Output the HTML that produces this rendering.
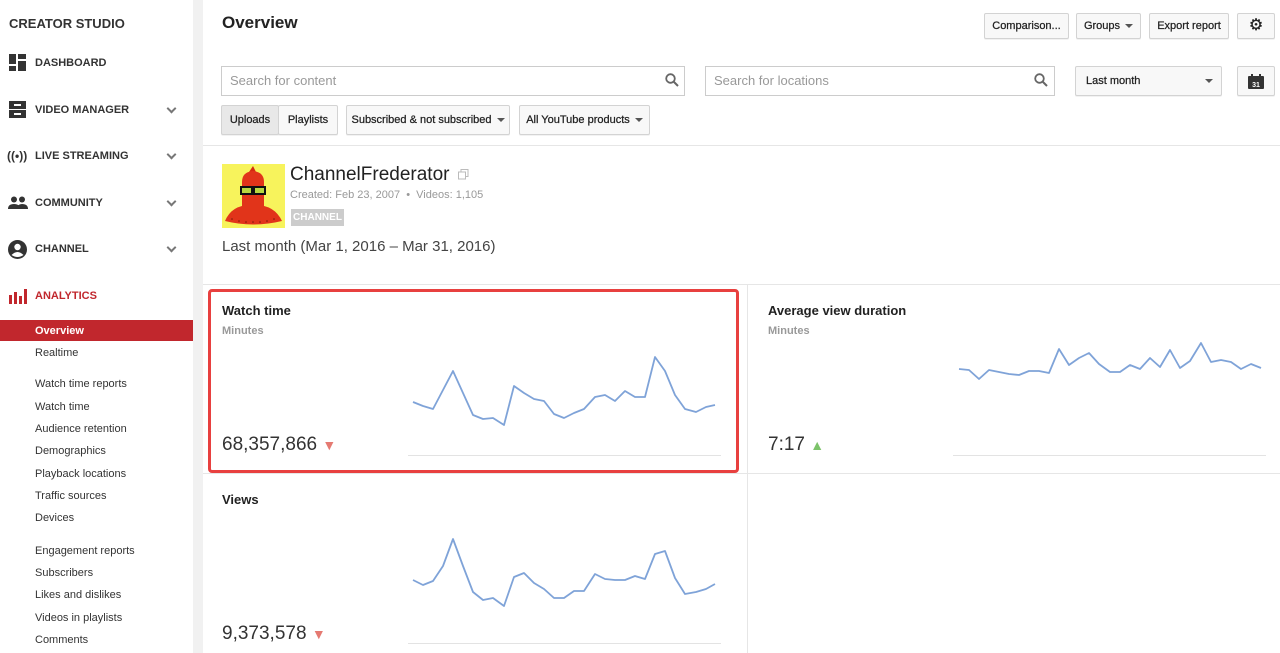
<!DOCTYPE html>
<html><head><meta charset="utf-8"><style>
*{margin:0;padding:0;box-sizing:border-box}
body{width:1280px;height:653px;overflow:hidden;background:#fff;font-family:"Liberation Sans",Arial,sans-serif;color:#333;position:relative}
.a{position:absolute}
.side{left:0;top:0;width:193px;height:653px;background:#fff}
.strip{left:193px;top:0;width:10px;height:653px;background:#f1f1f1}
.nav{position:absolute;left:35px;font-size:11px;font-weight:bold;color:#333}
.chev{position:absolute;left:168px;width:7px;height:7px;border-right:2px solid #777;border-bottom:2px solid #777;transform:rotate(45deg)}
.sub{position:absolute;left:35px;font-size:11px;color:#333}
.btn{position:absolute;border:1px solid #d3d3d3;background:#f8f8f8;border-radius:2px;font-size:11px;color:#222;text-align:center;white-space:nowrap;box-shadow:0 1px 0 rgba(0,0,0,.05);-webkit-text-stroke:0.25px #222}
.inp{position:absolute;border:1px solid #ccc;background:#fff;font-size:13px;color:#999;padding-left:8px}
.caret{display:inline-block;width:0;height:0;border-left:4px solid transparent;border-right:4px solid transparent;border-top:4px solid #555;vertical-align:middle;margin-left:5px}
.ct{position:absolute;font-size:13px;font-weight:bold;color:#222}
.cs{position:absolute;font-size:11px;font-weight:bold;color:#999}
.cv{position:absolute;font-size:19px;color:#333}
</style></head><body>
<div class="a side"></div>
<div class="a strip"></div>
<div class="a" style="left:9px;top:16px;font-size:13px;font-weight:bold;color:#333">CREATOR STUDIO</div>

<svg class="a" style="left:9px;top:54px" width="17" height="17" viewBox="0 0 17 17"><rect x="0" y="0" width="7" height="10" fill="#333"/><rect x="9" y="0" width="8" height="5" fill="#333"/><rect x="0" y="12" width="7" height="5" fill="#333"/><rect x="9" y="7" width="8" height="10" fill="#333"/></svg>
<div class="nav" style="top:57px">DASHBOARD</div>

<svg class="a" style="left:9px;top:101px" width="17" height="17"><rect x="0" y="0" width="17" height="8" fill="#333"/><rect x="0" y="9" width="17" height="8" fill="#333"/><rect x="5" y="3" width="7" height="2" fill="#fff"/><rect x="5" y="12" width="7" height="2" fill="#fff"/></svg>
<div class="nav" style="top:104px">VIDEO MANAGER</div><div class="chev" style="top:105px"></div>

<div class="a" style="left:7px;top:149px;font-size:12px;font-weight:bold;color:#333">((•))</div>
<div class="nav" style="top:150px">LIVE STREAMING</div><div class="chev" style="top:151px"></div>

<svg class="a" style="left:8px;top:196px" width="20" height="14"><circle cx="6" cy="3.5" r="3" fill="#333"/><circle cx="14" cy="3.5" r="3" fill="#333"/><path d="M0 13 Q0 8 6 8 Q12 8 12 13Z M9 13 Q9 8 14 8 Q20 8 20 13Z" fill="#333"/></svg>
<div class="nav" style="top:197px">COMMUNITY</div><div class="chev" style="top:198px"></div>

<svg class="a" style="left:8px;top:240px" width="19" height="19"><circle cx="9.5" cy="9.5" r="9.5" fill="#333"/><circle cx="9.5" cy="7" r="3.2" fill="#fff"/><path d="M3.5 15 Q9.5 9 15.5 15 Q9.5 19 3.5 15Z" fill="#fff"/></svg>
<div class="nav" style="top:243px">CHANNEL</div><div class="chev" style="top:244px"></div>

<svg class="a" style="left:9px;top:289px" width="18" height="15"><rect x="0" y="6" width="3" height="9" fill="#c1272d"/><rect x="5" y="3" width="3" height="12" fill="#c1272d"/><rect x="10" y="7" width="3" height="8" fill="#c1272d"/><rect x="15" y="0" width="3" height="15" fill="#c1272d"/></svg>
<div class="nav" style="top:290px;color:#c1272d">ANALYTICS</div>

<div class="a" style="left:0;top:320px;width:193px;height:21px;background:#c1272d"></div>
<div class="sub" style="top:325px;color:#fff;font-weight:bold">Overview</div>
<div class="sub" style="top:347px">Realtime</div>
<div class="sub" style="top:378px">Watch time reports</div>
<div class="sub" style="top:401px">Watch time</div>
<div class="sub" style="top:423px">Audience retention</div>
<div class="sub" style="top:445px">Demographics</div>
<div class="sub" style="top:468px">Playback locations</div>
<div class="sub" style="top:490px">Traffic sources</div>
<div class="sub" style="top:512px">Devices</div>
<div class="sub" style="top:545px">Engagement reports</div>
<div class="sub" style="top:567px">Subscribers</div>
<div class="sub" style="top:589px">Likes and dislikes</div>
<div class="sub" style="top:612px">Videos in playlists</div>
<div class="sub" style="top:634px">Comments</div>

<div class="a" style="left:222px;top:13px;font-size:17px;font-weight:bold;color:#222">Overview</div>
<div class="btn" style="left:984px;top:13px;width:85px;height:26px;line-height:24px">Comparison...</div>
<div class="btn" style="left:1076px;top:13px;width:65px;height:26px;line-height:24px">Groups<span class="caret"></span></div>
<div class="btn" style="left:1149px;top:13px;width:80px;height:26px;line-height:24px">Export report</div>
<div class="btn" style="left:1237px;top:13px;width:38px;height:26px;line-height:24px;font-size:16px">⚙</div>

<div class="inp" style="left:221px;top:66px;width:464px;height:30px;line-height:28px">Search for content</div>
<svg class="a" style="left:665px;top:73px" width="14" height="14"><circle cx="5.5" cy="5.5" r="4.3" fill="none" stroke="#666" stroke-width="1.8"/><path d="M8.5 8.5L13 13" stroke="#666" stroke-width="2"/></svg>
<div class="inp" style="left:705px;top:66px;width:350px;height:30px;line-height:28px">Search for locations</div>
<svg class="a" style="left:1034px;top:73px" width="14" height="14"><circle cx="5.5" cy="5.5" r="4.3" fill="none" stroke="#666" stroke-width="1.8"/><path d="M8.5 8.5L13 13" stroke="#666" stroke-width="2"/></svg>
<div class="btn" style="left:1075px;top:66px;width:147px;height:30px;line-height:28px;text-align:left;padding-left:10px">Last month<span class="caret" style="position:absolute;left:129px;top:12px;margin:0"></span></div>
<div class="btn" style="left:1237px;top:66px;width:38px;height:30px"><svg style="margin-top:7px" width="16" height="15"><rect x="0" y="2" width="16" height="13" rx="1" fill="#333"/><rect x="3" y="0" width="2" height="4" fill="#333"/><rect x="11" y="0" width="2" height="4" fill="#333"/><text x="8" y="13" font-size="7" fill="#fff" text-anchor="middle" font-family="Liberation Sans" font-weight="bold">31</text></svg></div>

<div class="btn" style="left:221px;top:105px;width:58px;height:30px;line-height:28px;background:#e8e8e8">Uploads</div>
<div class="btn" style="left:278px;top:105px;width:60px;height:30px;line-height:28px">Playlists</div>
<div class="btn" style="left:346px;top:105px;width:164px;height:30px;line-height:28px">Subscribed &amp; not subscribed<span class="caret"></span></div>
<div class="btn" style="left:519px;top:105px;width:131px;height:30px;line-height:28px">All YouTube products<span class="caret"></span></div>

<div class="a" style="left:203px;top:145px;width:1077px;height:1px;background:#e6e6e6"></div>

<svg class="a" style="left:222px;top:164px" width="63" height="64" viewBox="0 0 63 64"><rect width="63" height="64" fill="#f7f35c"/><path d="M27 8 L31 2 L34 8 Z" fill="#d42a10"/><path d="M20 42 L20 18 Q20 8 31 7 Q42 8 42 18 L42 42Z" fill="#e1341a"/><rect x="18" y="22" width="26" height="9" fill="#111"/><rect x="20" y="24" width="9" height="5" fill="#b8d840"/><rect x="33" y="24" width="9" height="5" fill="#b8d840"/><path d="M3 57 Q10 40 31 41 Q52 40 60 57 Q31 64 3 57Z" fill="#e1341a"/><g fill="#7a1a0a"><circle cx="10" cy="55" r="0.8"/><circle cx="17" cy="57" r="0.8"/><circle cx="24" cy="58" r="0.8"/><circle cx="31" cy="58" r="0.8"/><circle cx="38" cy="58" r="0.8"/><circle cx="45" cy="57" r="0.8"/><circle cx="52" cy="55" r="0.8"/></g></svg>
<div class="a" style="left:290px;top:164px;font-size:19px;color:#222">ChannelFrederator</div>
<svg class="a" style="left:458px;top:169px" width="11" height="11"><rect x="3" y="0.5" width="7" height="7" fill="none" stroke="#bbb"/><rect x="0.5" y="3" width="7" height="7" fill="#fff" stroke="#bbb"/></svg>
<div class="a" style="left:290px;top:189px;font-size:11px;color:#999">Created: Feb 23, 2007 &nbsp;•&nbsp; Videos: 1,105</div>
<div class="a" style="left:291px;top:209px;width:53px;height:17px;background:#ccc;color:#fff;font-size:10px;font-weight:bold;text-align:center;line-height:17px">CHANNEL</div>
<div class="a" style="left:222px;top:238px;font-size:15px;color:#444">Last month (Mar 1, 2016 – Mar 31, 2016)</div>

<div class="a" style="left:203px;top:284px;width:1077px;height:1px;background:#e6e6e6"></div>
<div class="a" style="left:203px;top:473px;width:1077px;height:1px;background:#e6e6e6"></div>
<div class="a" style="left:747px;top:284px;width:1px;height:369px;background:#e6e6e6"></div>
<div class="a" style="left:208px;top:289px;width:531px;height:184px;border:3px solid #e8403f;border-radius:4px"></div>

<div class="ct" style="left:222px;top:303px">Watch time</div>
<div class="cs" style="left:222px;top:325px">Minutes</div>
<div class="cv" style="left:222px;top:434px">68,357,866 <span style="color:#e57a72;font-size:14px">▼</span></div>

<div class="ct" style="left:768px;top:303px">Average view duration</div>
<div class="cs" style="left:768px;top:325px">Minutes</div>
<div class="cv" style="left:768px;top:434px">7:17 <span style="color:#7cc36a;font-size:14px">▲</span></div>

<div class="ct" style="left:222px;top:492px">Views</div>
<div class="cv" style="left:222px;top:623px">9,373,578 <span style="color:#e57a72;font-size:14px">▼</span></div>

<svg class="a" style="left:0;top:0" width="1280" height="653">
<g stroke="#e3e3e3" stroke-width="1"><line x1="408" y1="455.5" x2="721" y2="455.5"/><line x1="953" y1="455.5" x2="1266" y2="455.5"/><line x1="408" y1="643.5" x2="721" y2="643.5"/></g>
<g fill="none" stroke="#7fa3d8" stroke-width="1.8" stroke-linejoin="round">
<polyline points="413,402 423,406 433,409 443,390 453,371 463,393 473,415 483,419 493,418 504,425 514,386 524,393 534,399 544,401 554,414 564,418 574,413 584,409 595,397 605,395 615,401 625,391 635,397 645,397 655,357 665,371 675,395 685,409 696,412 706,407 715,405"/>
<polyline points="959,369 969,370 979,379 989,370 999,372 1009,374 1019,375 1029,371 1039,371 1049,373 1059,349 1069,365 1079,358 1089,353 1099,364 1110,372 1120,372 1130,365 1140,369 1150,358 1160,367 1170,350 1180,368 1190,361 1201,343 1211,362 1221,360 1231,362 1241,369 1251,364 1261,368"/>
<polyline points="413,580 423,585 433,581 443,566 453,539 463,566 473,592 483,600 493,598 504,606 514,577 524,573 534,583 544,589 554,598 564,598 574,591 584,591 595,574 605,579 615,580 625,580 635,576 645,579 655,554 665,551 675,578 685,594 696,592 706,589 715,584"/>
</g></svg>
</body></html>
